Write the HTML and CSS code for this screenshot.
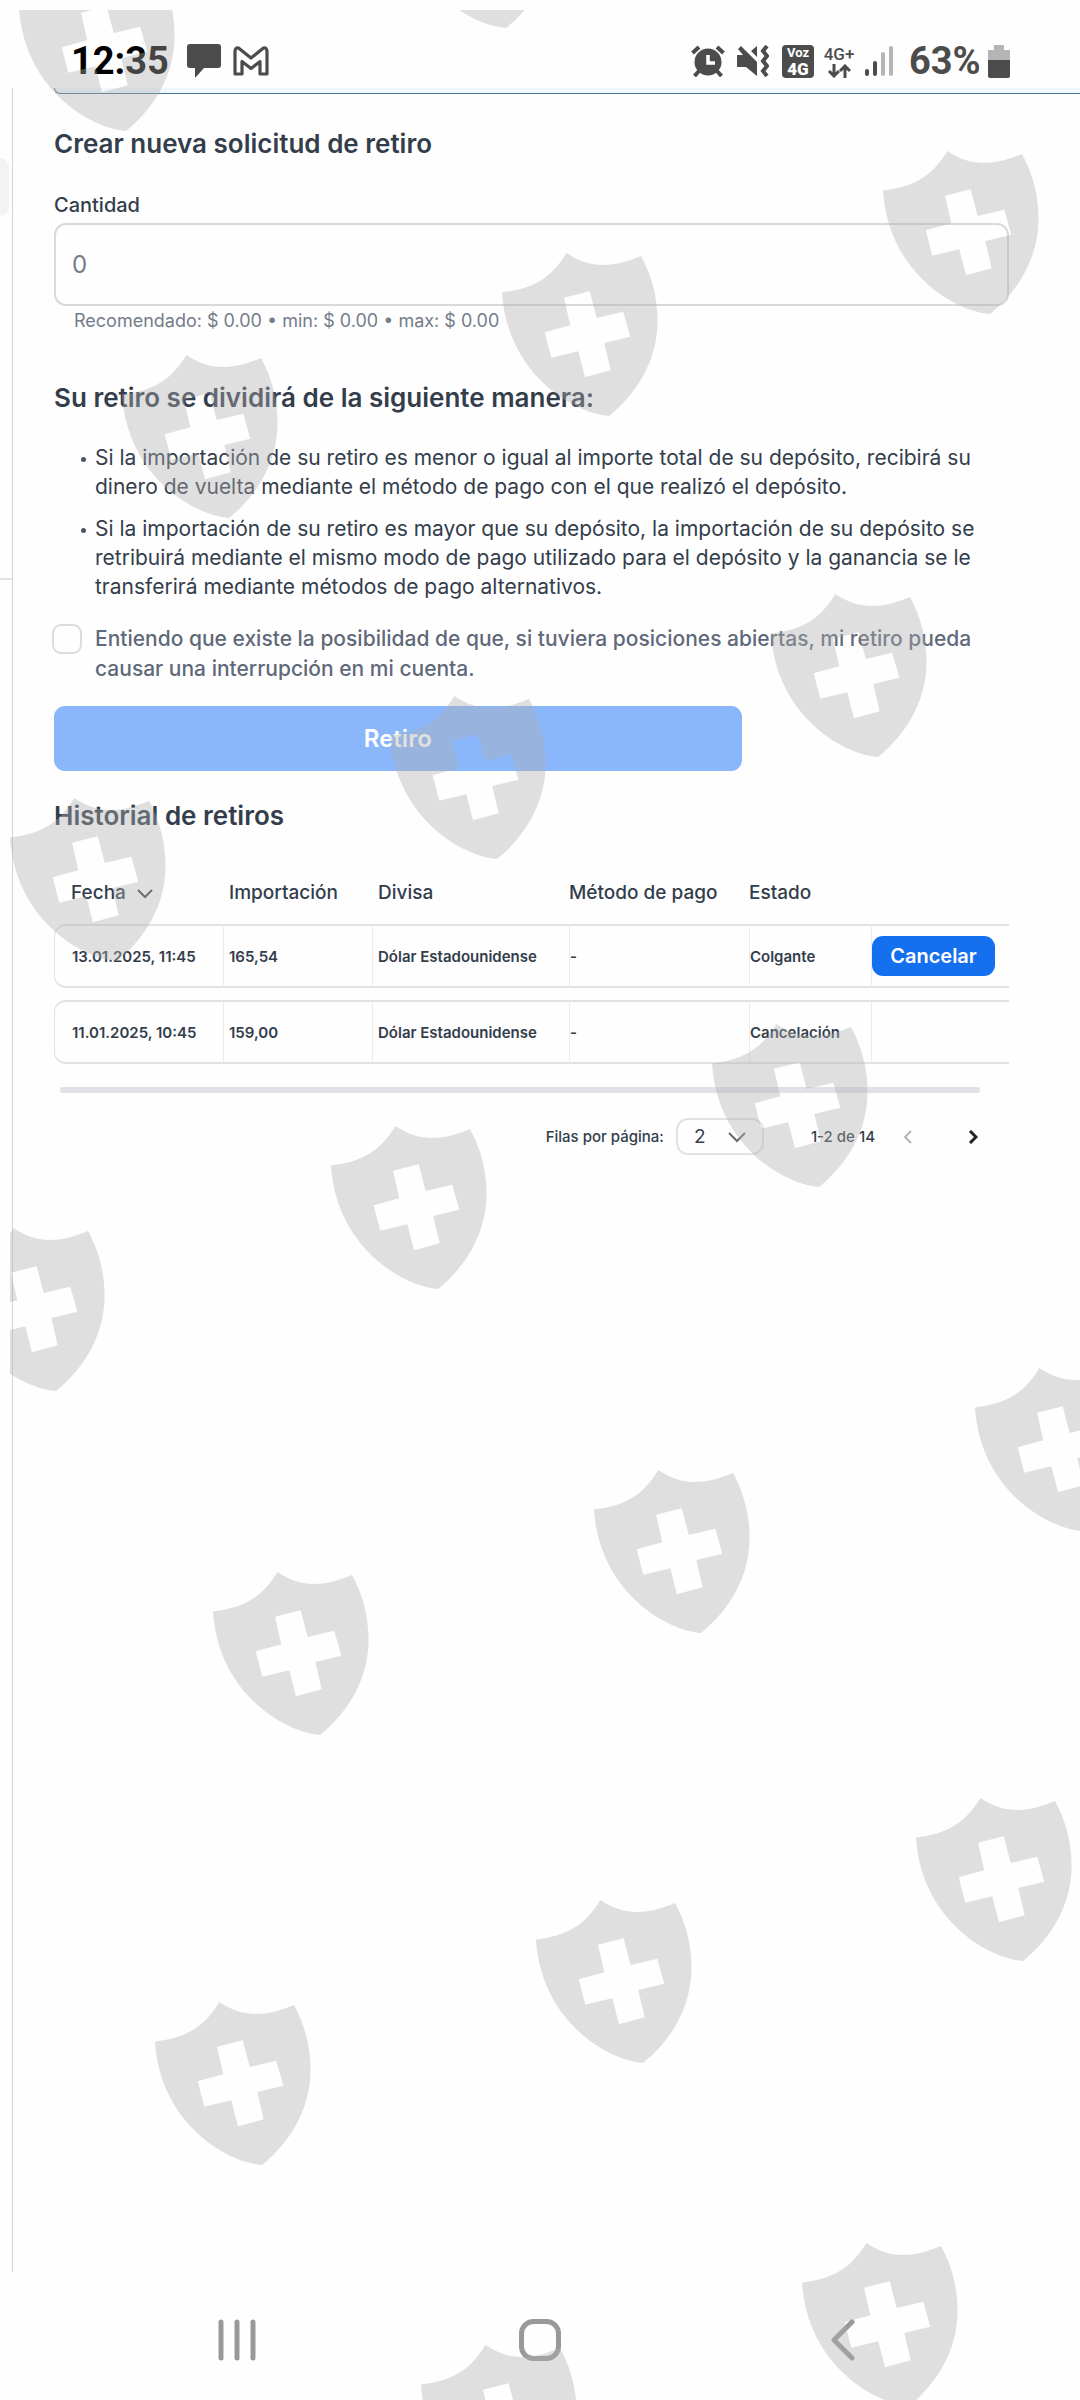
FILE: index.html
```
<!DOCTYPE html>
<html lang="es">
<head>
	<meta charset="UTF-8">
	<meta name="viewport" content="width=device-width, initial-scale=1">
	<title>Retiro</title>
	<link rel="stylesheet" href="styles.css">
</head>
<body>
<div class="screen">

	<header class="status">
		<span class="clock">12:35</span>
		<svg class="chat-icon" width="34" height="34" viewBox="0 0 34 34"><path d="M3 0h28q3 0 3 3v18q0 3-3 3H17L8 34V24H3q-3 0-3-3V3q0-3 3-3z" fill="#4c4c4c"/></svg>
		<svg class="mail-icon" width="36" height="30" viewBox="0 0 36 30"><path d="M2 5.500q0-4 3.500-3.500L18 12 30.500 2q3.500-.5 3.500 3.500V28h-7V15.500l-9 7-9-7V28H2z" fill="none" stroke="#4c4c4c" stroke-width="3.200" stroke-linejoin="round"/></svg>
		<div class="status-right">
			<svg width="34" height="32" viewBox="0 0 34 32"><g fill="none" stroke="#4c4c4c" stroke-width="4"><path d="M1.500 8 8 2M32.500 8 26 2M8 26l-4.500 5M26 26l4.500 5"/></g><circle cx="17" cy="17" r="13.500" fill="#4c4c4c"/><path d="M17 10v8h7" fill="none" stroke="#fff" stroke-width="3.500"/></svg>
			<svg class="mute-icon" width="32" height="32" viewBox="0 0 32 32"><path d="M0 10h6L1 4l3-3 16 16v14L9 22H0zM14 6l6-5v11z" fill="#4c4c4c"/><path d="m30 1-4 5 4 5-4 5 4 5-4 5 4 5" fill="none" stroke="#4c4c4c" stroke-width="4"/></svg>
			<span class="volte"><span>Voz</span><b>4G</b></span>
			<span class="data"><span>4G+</span>
				<svg width="24" height="14" viewBox="0 0 24 14"><path d="M7 0v12M2 7l5 5 5-5M18 14V2M13 7l5-5 5 5" fill="none" stroke="#4c4c4c" stroke-width="3"/></svg>
			</span>
			<svg class="signal" width="28" height="32" viewBox="0 0 28 32"><g stroke-width="4" stroke-linecap="round"><path d="M2 26v3M10 18v11" stroke="#4c4c4c"/><path d="M18 9v20M26 3v26" stroke="#b5b5b5"/></g></svg>
			<span class="percent">63%</span>
			<svg width="22" height="33" viewBox="0 0 22 33"><path d="M6 0h10v5h6v11H0V5h6z" fill="#b5b5b5"/><path d="M0 15h22v16q0 2-2 2H2q-2 0-2-2z" fill="#4c4c4c"/></svg>
		</div>
	</header>

	<div class="page">
		<aside class="side">
			<div class="side-tab"></div>
			<div class="side-line"></div>
		</aside>

		<main>
			<div class="prev-box"></div>

			<form class="withdraw">
				<h2>Crear nueva solicitud de retiro</h2>
				<label class="amount-label" for="amount">Cantidad</label>
				<input class="amount" id="amount" type="text" placeholder="0">
				<p class="hint">Recomendado: $ 0.00 • min: $ 0.00 • max: $ 0.00</p>

				<h2 class="split">Su retiro se dividirá de la siguiente manera:</h2>
				<ul>
					<li>Si la importación de su retiro es menor o igual al importe total de su depósito, recibirá su<br> dinero de vuelta mediante el método de pago con el que realizó el depósito.</li>
					<li>Si la importación de su retiro es mayor que su depósito, la importación de su depósito se<br> retribuirá mediante el mismo modo de pago utilizado para el depósito y la ganancia se le<br> transferirá mediante métodos de pago alternativos.</li>
				</ul>

				<div class="agree">
					<input type="checkbox" id="agree">
					<label for="agree">Entiendo que existe la posibilidad de que, si tuviera posiciones abiertas, mi retiro pueda<br> causar una interrupción en mi cuenta.</label>
				</div>
				<button class="submit" type="button">Retiro</button>
			</form>

			<section class="history">
				<h2>Historial de retiros</h2>
				<table>
					<thead>
						<tr>
							<th class="date">Fecha <svg width="16" height="10" viewBox="0 0 16 10"><path d="m1 1 7 7 7-7" fill="none" stroke="#414954" stroke-width="2"/></svg></th>
							<th class="sum">Importación</th>
							<th class="currency">Divisa</th>
							<th class="method">Método de pago</th>
							<th class="state">Estado</th>
							<th></th>
						</tr>
					</thead>
					<tbody>
						<tr>
							<td>13.01.2025, 11:45</td>
							<td>165,54</td>
							<td>Dólar Estadounidense</td>
							<td>-</td>
							<td>Colgante</td>
							<td><button class="cancel" type="button">Cancelar</button></td>
						</tr>
						<tr>
							<td>11.01.2025, 10:45</td>
							<td>159,00</td>
							<td>Dólar Estadounidense</td>
							<td>-</td>
							<td>Cancelación</td>
							<td></td>
						</tr>
					</tbody>
				</table>
				<div class="scrollbar"></div>

				<div class="pager">
					<label for="rows">Filas por página:</label>
					<span class="rows">
						<select id="rows"><option>2</option><option>5</option><option>10</option></select>
						<svg width="18" height="11" viewBox="0 0 18 11"><path d="m1 1 8 8 8-8" fill="none" stroke="#666b72" stroke-width="2"/></svg>
					</span>
					<span class="range">1-2 de 14</span>
					<button class="prev" type="button" aria-label="Anterior"><svg width="10" height="14" viewBox="0 0 10 14"><path d="M8 1 2 7l6 6" fill="none" stroke="#b5b5b5" stroke-width="2"/></svg></button>
					<button class="next" type="button" aria-label="Siguiente"><svg width="10" height="14" viewBox="0 0 10 14"><path d="m2 1 6 6-6 6" fill="none" stroke="#222" stroke-width="3"/></svg></button>
				</div>
			</section>
		</main>
	</div>

	<nav class="navbar">
		<button type="button" aria-label="Recientes"><svg width="38" height="42" viewBox="0 0 38 42"><path d="M3 3v36M19 3v36M35 3v36" stroke="#999" stroke-width="5" stroke-linecap="round"/></svg></button>
		<button type="button" aria-label="Inicio"><svg width="42" height="42" viewBox="0 0 42 42"><rect x="2.500" y="2.500" width="37" height="37" rx="12" fill="none" stroke="#999" stroke-width="5"/></svg></button>
		<button type="button" aria-label="Atrás"><svg width="24" height="42" viewBox="0 0 24 42"><path d="M21 3 3 21l18 18" fill="none" stroke="#999" stroke-width="5" stroke-linecap="round" stroke-linejoin="round"/></svg></button>
	</nav>

	<!-- shields over the whole screen -->
	<svg class="watermark" aria-hidden="true">
		<defs>
			<path id="shield" fill-rule="evenodd" d="M0 39.500C29 36 48 27 64.500 0 88 16 110 15 139 3c11 20 17 43 16.500 67C155 105 137 139 107 163 70 160 5 120 0 39.500zM62 44.700l25.700-6.400 7 26.700 26.600-6.300 7 25-26 6.300 6.400 27.300-25.700 7-6.700-26-27 6.400-6.600-25.400 25.600-7z"/>
		</defs>
		<use href="#shield" x="389" y="-145"/>
		<use href="#shield" x="9" y="-42"/>
		<use href="#shield" x="873" y="141"/>
		<use href="#shield" x="492" y="243"/>
		<use href="#shield" x="112" y="345"/>
		<use href="#shield" x="761" y="584"/>
		<use href="#shield" x="380" y="686"/>
		<use href="#shield" x="0" y="788"/>
		<use href="#shield" x="702" y="1014"/>
		<use href="#shield" x="321" y="1116"/>
		<use href="#shield" x="-61" y="1218"/>
		<use href="#shield" x="965" y="1358"/>
		<use href="#shield" x="584" y="1460"/>
		<use href="#shield" x="203" y="1562"/>
		<use href="#shield" x="906" y="1788"/>
		<use href="#shield" x="526" y="1890"/>
		<use href="#shield" x="145" y="1992"/>
		<use href="#shield" x="792" y="2233"/>
		<use href="#shield" x="411" y="2335"/>
	</svg>
</div>
</body>
</html>
```
FILE: styles.css
```
* {
	box-sizing: border-box;
}

body {
	margin: 0;
	background: #fefefe;
	color: #333d4b;
	font-family: Inter, "Liberation Sans", sans-serif;
}

button {
	border: 0;
	padding: 0;
	background: none;
	font-family: inherit;
}

svg {
	display: block;
}

.screen {
	position: relative;
	display: flex;
	flex-direction: column;
	min-height: 100vh;
	overflow: hidden;
}

/* phone status bar */
.status {
	display: flex;
	align-items: center;
	height: 88px;
	padding: 34px 70px 0 71px;
	color: #4c4c4c;
	font-family: Roboto, sans-serif;
	flex-shrink: 0;
}

.clock,
.percent {
	font-size: 38px;
	font-weight: 700;
	line-height: 48px;
}

.clock {
	color: #000;
	width: 116px;
}

.mail-icon {
	margin-left: 12px;
}

.status-right {
	display: flex;
	align-items: center;
	margin-left: auto;
}

.mute-icon {
	margin-left: 12px;
}

.volte {
	display: flex;
	flex-direction: column;
	align-items: center;
	width: 32px;
	height: 33px;
	margin-left: 13px;
	border-radius: 4px;
	background: #4c4c4c;
	color: #fff;
	font-size: 13px;
	font-weight: 700;
	line-height: 15px;
}

.volte b {
	font-size: 17px;
	line-height: 18px;
}

.data {
	display: flex;
	flex-direction: column;
	align-items: center;
	width: 32px;
	margin-left: 9px;
	font-size: 17px;
	font-weight: 500;
	line-height: 20px;
}

.signal {
	margin: 0 16px 0 10px;
}

.percent {
	width: 79px;
}

.page {
	display: flex;
	flex: 1;
}

/* edge of the side menu */
.side {
	width: 13px;
	border-right: 1px solid #d4d4d4;
	padding-top: 70px;
	flex-shrink: 0;
}

.side-tab {
	width: 9px;
	height: 58px;
	border-radius: 0 9px 9px 0;
	background: #f3f3f3;
}

.side-line {
	height: 2px;
	margin-top: 362px;
	background: #e2e2e2;
}

main {
	flex: 1;
	padding-left: 41px;
}

.prev-box {
	height: 6px;
	border-bottom: 1px solid #4a7593;
	border-left: 1px solid #4a7593;
	border-radius: 0 0 0 10px;
	background: #eff8ff;
}

.withdraw,
.history {
	margin-right: 71px;
}

h2 {
	margin: 0;
	font-size: 26px;
	font-weight: 600;
	line-height: 32px;
}

.withdraw {
	padding-top: 34px;
}

.amount-label {
	display: block;
	margin-top: 33px;
	font-size: 20px;
	font-weight: 500;
	line-height: 24px;
}

.amount {
	display: block;
	width: 100%;
	height: 83px;
	margin-top: 6px;
	padding: 0 16px;
	border: 2px solid #d9d9dc;
	border-radius: 12px;
	background: none;
	font-family: inherit;
	font-size: 24px;
}

.amount::placeholder {
	color: #757c8a;
}

.hint {
	margin: 3px 0 0 20px;
	color: #757c8a;
	font-size: 18px;
	line-height: 24px;
}

.split {
	margin-top: 49px;
}

ul {
	margin: 29px 0 0;
	padding: 0 0 0 41px;
	list-style: none;
}

li {
	margin-bottom: 13px;
	font-size: 21px;
	line-height: 29px;
}

li::before {
	content: "";
	float: left;
	width: 5px;
	height: 5px;
	margin: 14px 0 0 -14px;
	border-radius: 50%;
	background: #4c5562;
}

.agree {
	display: flex;
	margin: 23px 0 0 -2px;
	color: #5f6979;
	font-size: 21px;
	font-weight: 500;
	line-height: 30px;
}

.agree input {
	appearance: none;
	width: 30px;
	height: 30px;
	margin: 0 13px 0 0;
	border: 2px solid #dcdce0;
	border-radius: 9px;
	flex-shrink: 0;
}

.submit {
	display: block;
	width: 72%;
	height: 65px;
	margin-top: 22px;
	border-radius: 11px;
	background: #8ab6fb;
	color: #fff;
	font-size: 24px;
	font-weight: 600;
}

.history h2 {
	margin-top: 29px;
}

table {
	width: 100%;
	margin-top: 28px;
	border-collapse: separate;
	border-spacing: 0 12px;
	table-layout: fixed;
}

th {
	height: 40px;
	padding: 0 0 0 6px;
	font-size: 19px;
	font-weight: 500;
	text-align: left;
	white-space: nowrap;
}

th svg {
	display: inline-block;
	margin-left: 6px;
}

td {
	height: 64px;
	padding: 0 0 0 5px;
	border: solid #e2e2e2;
	border-width: 2px 0 2px 1px;
	font-size: 15px;
	font-weight: 600;
	white-space: nowrap;
}

td + td {
	border-left-color: #ececec;
}

th:first-child,
td:first-child {
	padding-left: 17px;
}

td:first-child {
	border-radius: 12px 0 0 12px;
}

th:nth-child(n+4),
td:nth-child(n+4) {
	padding-left: 0;
}

.date { width: 169px; }
.sum { width: 149px; }
.currency { width: 197px; }
.method { width: 180px; }
.state { width: 122px; }

.cancel {
	display: block;
	width: 123px;
	height: 40px;
	border-radius: 11px;
	background: #1470ef;
	color: #fff;
	font-size: 20px;
	font-weight: 600;
}

.scrollbar {
	height: 6px;
	margin: 11px 29px 0 6px;
	border-radius: 2px;
	background: #e2e1ea;
}

.pager {
	display: flex;
	align-items: center;
	justify-content: flex-end;
	margin: 25px 31px 0 0;
	font-size: 15px;
	font-weight: 500;
}

.rows {
	position: relative;
	width: 88px;
	margin: 0 47px 0 12px;
}

.rows select {
	appearance: none;
	width: 100%;
	height: 37px;
	padding: 0 16px;
	border: 2px solid #e2e2e2;
	border-radius: 12px;
	background: none;
	color: #333d4b;
	font-family: inherit;
	font-size: 19px;
}

.rows svg {
	position: absolute;
	right: 18px;
	top: 14px;
	pointer-events: none;
}

.prev {
	margin-left: 28px;
}

.next {
	margin-left: 55px;
}

/* phone navigation buttons */
.navbar {
	display: flex;
	align-items: center;
	justify-content: space-around;
	height: 128px;
	padding: 8px 86px 0;
	flex-shrink: 0;
}

.navbar button {
	display: flex;
	justify-content: center;
	flex: 1;
}

.watermark {
	position: absolute;
	top: 10px;
	left: 10px;
	width: calc(100% - 10px);
	height: calc(100% - 10px);
	fill: #b0b0b0;
	opacity: .39;
	overflow: hidden;
	pointer-events: none;
}
```
